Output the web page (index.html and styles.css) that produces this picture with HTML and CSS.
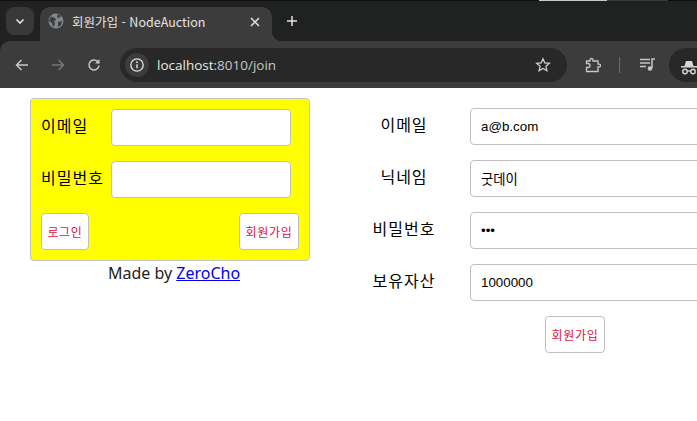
FILE: index.html
```html
<!DOCTYPE html>
<html lang="ko">
<head>
<meta charset="utf-8">
<title>회원가입 - NodeAuction</title>
<link rel="stylesheet" href="styles.css">
</head>
<body>
<header class="chrome">
  <div class="strip">
    <div class="tab-search"><svg width="12" height="12" viewBox="0 0 12 12"><path d="M2.500 4.500 6 8l3.500-3.500" fill="none" stroke="#e3e3e3" stroke-width="1.600"/></svg></div>
    <div class="tab">
      <svg class="globe" width="16" height="16" viewBox="0 0 16 16"><circle cx="8" cy="8" r="7.500" fill="#80868b"/><path d="M3 3.500 7 5l1 2-2 1 1 3-2 3-1-4-3-2zM10 1l3 2-2 2-2-1zM10 9l4-1-1 4-3 2z" fill="#3c3c3c"/></svg>
      <span class="tab-title">회원가입 - NodeAuction</span>
      <svg class="tab-close" width="10" height="10" viewBox="0 0 10 10"><path d="M1 1l8 8M9 1l-8 8" stroke="#e3e3e3" stroke-width="1.500"/></svg>
    </div>
    <svg class="new-tab" width="12" height="12" viewBox="0 0 12 12"><path d="M6 1v10M1 6h10" stroke="#e3e3e3" stroke-width="1.500"/></svg>
    <div class="top-marks"><span class="mark-light"></span><span class="mark-dark"></span></div>
  </div>
  <div class="toolbar">
    <svg class="nav" width="16" height="16" viewBox="0 0 16 16"><path d="M14 8H3M7.500 3 2.500 8l5 5" fill="none" stroke="#c7c7c7" stroke-width="1.500"/></svg>
    <svg class="nav" width="16" height="16" viewBox="0 0 16 16"><path d="M2 8h11M8.500 3l5 5-5 5" fill="none" stroke="#757575" stroke-width="1.500"/></svg>
    <svg class="nav" width="16" height="16" viewBox="0 0 16 16"><path d="M13 8.500A5 5 0 1 1 11.500 4.400L13 6" fill="none" stroke="#c7c7c7" stroke-width="1.500"/><path d="M13.500 2v4.500H9z" fill="#c7c7c7"/></svg>
    <div class="omnibox">
      <div class="info"><svg width="16" height="16" viewBox="0 0 16 16"><circle cx="8" cy="8" r="6.200" fill="none" stroke="#e3e3e3" stroke-width="1.300"/><path d="M8 7.200v4" stroke="#e3e3e3" stroke-width="1.400"/><circle cx="8" cy="5.200" r=".9" fill="#e3e3e3"/></svg></div>
      <span class="url">localhost<span class="url-rest">:8010/join</span></span>
      <svg class="star" width="16" height="16" viewBox="0 0 16 16"><path d="M8 1.800l1.800 4.100 4.500.4-3.400 3 1 4.400L8 11.400l-3.900 2.300 1-4.400-3.400-3 4.500-.4z" fill="none" stroke="#d0d0d0" stroke-width="1.300"/></svg>
    </div>
    <svg class="puzzle" width="16" height="16" viewBox="0 0 16 16"><path d="M1.500 4H5V3a1.500 1.500 0 0 1 3 0v1h5v3.200h1.200a1.200 1.200 0 0 1 0 2.600H13V14.500H1.500v-4H3a2 2 0 0 0 0-4H1.500z" fill="none" stroke="#c7c7c7" stroke-width="1.300"/></svg>
    <span class="divider"></span>
    <svg class="media" width="16" height="16" viewBox="0 0 16 16"><path d="M0 2.500h10M0 6h10M0 9.500h6" stroke="#c7c7c7" stroke-width="1.300"/><path d="M12 11V2h3" fill="none" stroke="#c7c7c7" stroke-width="1.500"/><circle cx="10" cy="11.500" r="2.300" fill="#c7c7c7"/></svg>
    <div class="incognito"><svg width="16" height="16" viewBox="0 0 16 16"><path d="M3.500 6 5 1h6l1.500 5z" fill="#d8d8d8"/><path d="M0 6.800h16" stroke="#d8d8d8" stroke-width="1.500"/><circle cx="4" cy="11.500" r="2.200" fill="none" stroke="#d8d8d8" stroke-width="1.400"/><circle cx="12" cy="11.500" r="2.200" fill="none" stroke="#d8d8d8" stroke-width="1.400"/><path d="M6 11h4" stroke="#d8d8d8" stroke-width="1.300"/></svg></div>
  </div>
</header>
<main class="page">
  <aside class="side">
    <form class="login">
      <div class="login-row"><label class="login-label">이메일</label><input class="field" type="email"></div>
      <div class="login-row"><label class="login-label">비밀번호</label><input class="field" type="password"></div>
      <div class="login-actions"><a class="btn btn-small">로그인</a><a class="btn btn-wide">회원가입</a></div>
    </form>
    <div class="credit">Made by <a class="credit-link" href="#">ZeroCho</a></div>
  </aside>
  <section class="join">
    <div class="join-row"><label class="join-label">이메일</label><input class="field join-field" type="text" value="a@b.com"></div>
    <div class="join-row"><label class="join-label">닉네임</label><input class="field join-field" type="text" value="굿데이"></div>
    <div class="join-row"><label class="join-label">비밀번호</label><input class="field join-field" type="password" value="abc"></div>
    <div class="join-row"><label class="join-label">보유자산</label><input class="field join-field" type="text" value="1000000"></div>
    <div class="join-actions"><button class="btn btn-wide" type="button">회원가입</button></div>
  </section>
</main>
</body>
</html>
```

FILE: styles.css
```css
* { box-sizing: border-box; }
html, body { margin: 0; height: 100%; overflow: hidden; background: #fff; }
body { font-family: "Noto Sans CJK KR", "Liberation Sans", sans-serif; }

.chrome { height: 88px; background: #202222; color: #e3e3e3; }
.strip { position: relative; height: 41px; display: flex; align-items: flex-end; padding-left: 6px; border-top: 1px solid #0f0f0f; }
.tab-search { width: 28px; height: 28px; margin: 0 6px 6px 0; background: #383838; border-radius: 8px; display: flex; align-items: center; justify-content: center; }
.tab { position: relative; width: 232px; height: 34px; background: #3c3c3c; border-radius: 10px 10px 0 0; display: flex; align-items: center; padding: 0 0 6px 8px; }
.tab::after { content: ""; position: absolute; right: -10px; bottom: 0; width: 10px; height: 10px; background: radial-gradient(circle at 100% 0, transparent 10px, #3c3c3c 10.500px); }
.globe { flex: none; }
.tab-title { margin-left: 8px; font-size: 12.500px; font-family: "Noto Sans CJK KR", "Open Sans", sans-serif; color: #e3e3e3; white-space: nowrap; width: 178px; }
.tab-close { flex: none; margin-top: 2px; }
.new-tab { margin: 0 0 14px 14px; }
.top-marks { position: absolute; left: 539px; top: -1px; height: 1px; display: flex; }
.mark-light { width: 68px; background: #c9c9c9; }
.mark-dark { width: 61px; background: #3a3a3a; }

.toolbar { height: 47px; background: #3c3c3c; border-radius: 10px 0 0 0; display: flex; align-items: center; padding: 0 0 0 14px; }
.nav { flex: none; margin-right: 20px; }
.omnibox { width: 447px; height: 34px; margin-left: -2px; flex: none; background: #282828; border-radius: 17px; display: flex; align-items: center; padding: 0 16px 0 5px; }
.info { width: 24px; height: 24px; border-radius: 50%; background: #3c3c3c; display: flex; align-items: center; justify-content: center; flex: none; }
.url { margin-left: 8px; font: 13.500px "Open Sans", "Liberation Sans", sans-serif; color: #e8e8e8; flex: 1; }
.url-rest { color: #c7c7c7; }
.star { flex: none; }
.puzzle { margin-left: 18px; flex: none; }
.divider { width: 1px; height: 16px; margin-left: 18px; background: #6b6b6b; flex: none; }
.media { margin-left: 20px; flex: none; }
.incognito { width: 60px; height: 34px; margin-left: 13px; flex: none; background: #282828; border-radius: 17px 0 0 17px; padding: 9px 0 0 12px; }

.page { display: flex; align-items: flex-start; padding: 10px 0 0 30px; width: 697px; overflow: hidden; }
.side { width: 280px; flex: none; }
.login { height: 163px; background: #ff0; border: 1px solid #c4c4c4; border-radius: 4px; padding: 10px; }
.login-row { display: flex; align-items: center; height: 37px; margin-bottom: 15px; }
.login-label { width: 70px; flex: none; font-size: 16px; line-height: 20px; letter-spacing: 1px; margin-top: -6px; color: #000; white-space: nowrap; }
.field { width: 180px; height: 37px; background: #fff; border: 1px solid #c0c0c0; border-radius: 4px; padding: 0 10px; outline: 0; font: 13.330px "Liberation Sans", "Noto Sans CJK KR", sans-serif; color: #000; }
.login-actions { display: flex; justify-content: space-between; }
.btn { display: flex; align-items: center; justify-content: center; height: 37px; padding: 0; background: #fff; border: 1px solid #c0c0c0; border-radius: 4px; font: 12px "Noto Sans CJK KR", sans-serif; letter-spacing: .7px; color: #dc143c; }
.btn-small { width: 48px; }
.btn-wide { width: 60px; }
.credit { text-align: center; font: 16px/22px "Noto Sans", "Liberation Sans", sans-serif; color: #222; margin-top: 1px; padding-left: 8px; }
.credit-link { color: #00e; }

.join { margin-left: 54px; flex: none; width: 500px; padding-top: 10px; }
.join-row { display: flex; align-items: center; height: 37px; margin-bottom: 15px; }
.join-label { width: 80px; margin-right: 26px; flex: none; text-align: center; font-size: 16px; line-height: 20px; letter-spacing: 1px; margin-top: -5px; color: #000; white-space: nowrap; }
.join-field { width: 300px; flex: none; }
.join-actions { width: 241px; display: flex; justify-content: flex-end; }
```
